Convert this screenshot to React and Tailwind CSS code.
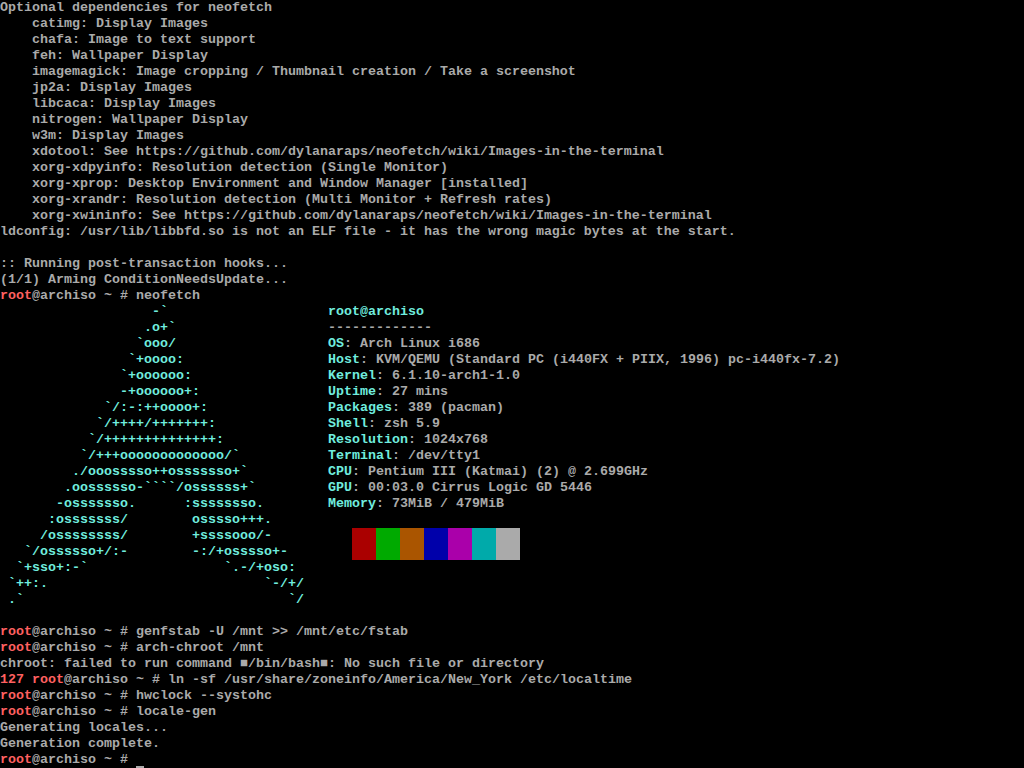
import React from 'react';

const bootLog = [
  'Optional dependencies for neofetch',
  '    catimg: Display Images',
  '    chafa: Image to text support',
  '    feh: Wallpaper Display',
  '    imagemagick: Image cropping / Thumbnail creation / Take a screenshot',
  '    jp2a: Display Images',
  '    libcaca: Display Images',
  '    nitrogen: Wallpaper Display',
  '    w3m: Display Images',
  '    xdotool: See https://github.com/dylanaraps/neofetch/wiki/Images-in-the-terminal',
  '    xorg-xdpyinfo: Resolution detection (Single Monitor)',
  '    xorg-xprop: Desktop Environment and Window Manager [installed]',
  '    xorg-xrandr: Resolution detection (Multi Monitor + Refresh rates)',
  '    xorg-xwininfo: See https://github.com/dylanaraps/neofetch/wiki/Images-in-the-terminal',
  'ldconfig: /usr/lib/libbfd.so is not an ELF file - it has the wrong magic bytes at the start.',
  ' ',
  ':: Running post-transaction hooks...',
  '(1/1) Arming ConditionNeedsUpdate...',
];

const archLogo = [
  '                   -`',
  '                  .o+`',
  '                 `ooo/',
  '                `+oooo:',
  '               `+oooooo:',
  '               -+oooooo+:',
  '             `/:-:++oooo+:',
  '            `/++++/+++++++:',
  '           `/++++++++++++++:',
  '          `/+++ooooooooooooo/`',
  '         ./ooosssso++osssssso+`',
  '        .oossssso-````/ossssss+`',
  '       -osssssso.      :ssssssso.',
  '      :osssssss/        osssso+++.',
  '     /ossssssss/        +ssssooo/-',
  '   `/ossssso+/:-        -:/+osssso+-',
  '  `+sso+:-`                 `.-/+oso:',
  ' `++:.                           `-/+/',
  ' .`                                 `/',
];

const sysInfo = [
  ['OS', 'Arch Linux i686'],
  ['Host', 'KVM/QEMU (Standard PC (i440FX + PIIX, 1996) pc-i440fx-7.2)'],
  ['Kernel', '6.1.10-arch1-1.0'],
  ['Uptime', '27 mins'],
  ['Packages', '389 (pacman)'],
  ['Shell', 'zsh 5.9'],
  ['Resolution', '1024x768'],
  ['Terminal', '/dev/tty1'],
  ['CPU', 'Pentium III (Katmai) (2) @ 2.699GHz'],
  ['GPU', '00:03.0 Cirrus Logic GD 5446'],
  ['Memory', '73MiB / 479MiB'],
];

const Prompt = ({ status, children }) => (
  <div className="h-4">
    {status && <span className="text-[#ff6060]">{status} </span>}
    <span className="text-[#ff6060]">root</span>@archiso ~ # {children}
  </div>
);

const App = () => {
  return (
    <div className="w-[1024px] h-[768px] overflow-hidden bg-black text-[#aaaaaa] whitespace-pre font-['Liberation_Mono',monospace] font-bold text-[13.33px] leading-4">
      {bootLog.map((line, i) => (
        <div key={i} className="h-4">{line}</div>
      ))}
      <Prompt>neofetch</Prompt>

      <div className="flex">
        <div className="w-[328px] text-[#70ecdf]">
          {archLogo.map((line, i) => (
            <div key={i} className="h-4">{line}</div>
          ))}
        </div>
        <div>
          <div className="h-4 text-[#70ecdf]">root@archiso</div>
          <div className="h-4">-------------</div>
          {sysInfo.map(([label, value]) => (
            <div key={label} className="h-4">
              <span className="text-[#70ecdf]">{label}</span>: {value}
            </div>
          ))}
          <div className="flex mt-4 ml-6">
            <div className="w-6 h-8 bg-[#aa0000]" />
            <div className="w-6 h-8 bg-[#00aa00]" />
            <div className="w-6 h-8 bg-[#aa5500]" />
            <div className="w-6 h-8 bg-[#0000aa]" />
            <div className="w-6 h-8 bg-[#aa00aa]" />
            <div className="w-6 h-8 bg-[#00aaaa]" />
            <div className="w-6 h-8 bg-[#aaaaaa]" />
          </div>
        </div>
      </div>

      <div className="h-4" />
      <Prompt>genfstab -U /mnt &gt;&gt; /mnt/etc/fstab</Prompt>
      <Prompt>arch-chroot /mnt</Prompt>
      <div className="h-4">chroot: failed to run command ■/bin/bash■: No such file or directory</div>
      <Prompt status="127">ln -sf /usr/share/zoneinfo/America/New_York /etc/localtime</Prompt>
      <Prompt>hwclock --systohc</Prompt>
      <Prompt>locale-gen</Prompt>
      <div className="h-4">Generating locales...</div>
      <div className="h-4">Generation complete.</div>
      <Prompt>
        <span className="inline-block w-2 h-4 align-top border-b-2 border-[#aaaaaa]" />
      </Prompt>
    </div>
  );
};

export default App;
